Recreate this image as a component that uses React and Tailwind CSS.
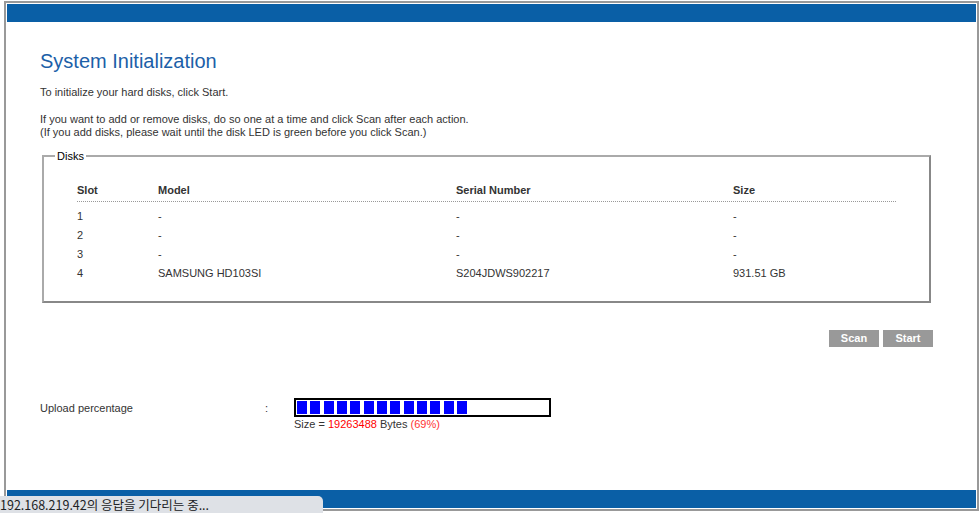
import React from 'react';

const disks = [
  { slot: '1', model: '-', serial: '-', size: '-' },
  { slot: '2', model: '-', serial: '-', size: '-' },
  { slot: '3', model: '-', serial: '-', size: '-' },
  { slot: '4', model: 'SAMSUNG HD103SI', serial: 'S204JDWS902217', size: '931.51 GB' },
];

const App = () => {
  const blocks = Array.from({ length: 13 });

  return (
    <div className="relative w-[980px] h-[513px] bg-white overflow-hidden text-[11px] text-[#333]" style={{ fontFamily: 'Tahoma, "Liberation Sans", Arial, sans-serif' }}>
      <div className="absolute left-[4px] top-[1px] w-[975px] h-[510px] border-2 border-[#999] flex flex-col">
        {/* top bar */}
        <div className="h-[18px] mt-[1px] mx-[1px] bg-[#0a5fa6]" />

        <div className="flex-1 pl-[34px] pr-[46px]">
          <h1 className="mt-[26px] text-[20px] leading-[26px] text-[#1c5fa8]">System Initialization</h1>
          <p className="mt-[11px] leading-[15px]">To initialize your hard disks, click Start.</p>
          <p className="mt-[13px] leading-[13px]">If you want to add or remove disks, do so one at a time and click Scan after each action.</p>
          <p className="leading-[13px]">(If you add disks, please wait until the disk LED is green before you click Scan.)</p>

          {/* Disks fieldset */}
          <fieldset className="mt-[11px] ml-[2px] h-[153px] border-2 border-[#888] border-t-[#aaa] border-l-[#aaa] px-[33px] pt-[21px]">
            <legend className="ml-[-22px] px-[2px] text-[11px] leading-[12px] text-[#000]">Disks</legend>
            <div>
              <div className="flex font-bold text-[#333] leading-[14px] pb-[4px] border-b border-dotted border-[#999]">
                <span className="w-[81px]">Slot</span>
                <span className="w-[298px]">Model</span>
                <span className="w-[277px]">Serial Number</span>
                <span>Size</span>
              </div>
              <div className="mt-[5px]">
                {disks.map((d) => (
                  <div key={d.slot} className="flex h-[19px] items-center">
                    <span className="w-[81px]">{d.slot}</span>
                    <span className="w-[298px]">{d.model}</span>
                    <span className="w-[277px]">{d.serial}</span>
                    <span>{d.size}</span>
                  </div>
                ))}
              </div>
            </div>
          </fieldset>

          {/* buttons */}
          <div className="mt-[27px] flex justify-end gap-[4px] mr-[-2px]">
            <button className="w-[50px] h-[17px] bg-[#999] text-white text-[11px] leading-[17px] font-semibold">Scan</button>
            <button className="w-[50px] h-[17px] bg-[#999] text-white text-[11px] leading-[17px] font-semibold">Start</button>
          </div>

          {/* upload */}
          <div className="mt-[51px] flex items-start">
            <span className="w-[225px] mt-[3px] leading-[14px]">Upload percentage</span>
            <span className="w-[29px] mt-[3px] leading-[14px]">:</span>
            <div>
              <div className="w-[257px] h-[19px] border-2 border-black flex items-center gap-[3.33px] pl-[1px]">
                {blocks.map((_, i) => (
                  <div key={i} className="w-[10px] h-[13px] bg-[#0000ff]" />
                ))}
              </div>
              <p className="leading-[14px]">
                Size = <span className="text-[#ff0000]">19263488</span> Bytes <span className="text-[#ff3333]">(69%)</span>
              </p>
            </div>
          </div>
        </div>

        {/* bottom bar */}
        <div className="h-[18px] mb-[1px] mx-[1px] bg-[#0a5fa6]" />
      </div>

      {/* browser status bubble */}
      <div className="absolute left-0 bottom-0 w-[323px] h-[17px] bg-[#dee1e6] rounded-tr-[5px] text-[12.5px] leading-[17px] text-[#202124]" style={{ fontFamily: '"Noto Sans CJK KR", "Liberation Sans", sans-serif' }}>
        192.168.219.42의 응답을 기다리는 중...
      </div>
    </div>
  );
};

export default App;
